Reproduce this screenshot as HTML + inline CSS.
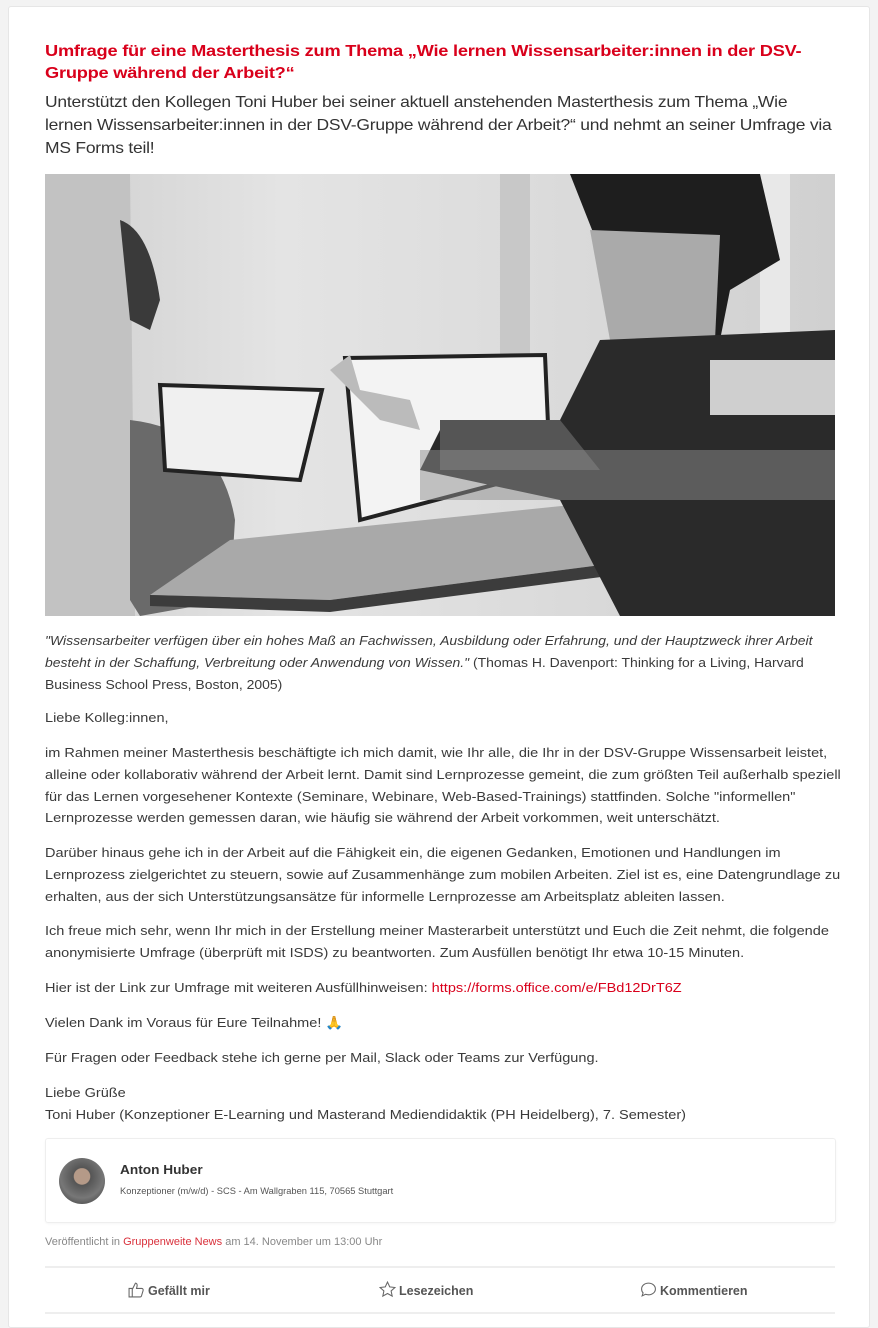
<!DOCTYPE html>
<html><head><meta charset="utf-8"><style>
body{margin:0;width:878px;height:1319px;background:#f3f3f3;font-family:"Liberation Sans",sans-serif;overflow:hidden;position:relative}
.card{position:absolute;left:8px;top:6px;width:860px;height:1320px;background:#fff;border:1px solid #e6e6e6;border-radius:3px}
.a{position:absolute;left:45px;white-space:nowrap;transform-origin:0 0}
.t{color:#d9001b;font-weight:bold;font-size:15.6px;line-height:22px;letter-spacing:-0.2px;transform:scaleX(1.17)}
.s{color:#333;font-size:15.6px;line-height:23px;letter-spacing:-0.2px;transform:scaleX(1.12)}
.p{color:#3a3a3a;font-size:12.8px;line-height:21.8px;transform:scaleX(1.135)}
.red{color:#d9001b}
</style></head><body>
<div class="card"></div>
<div class="a t" style="top:41px">Umfrage für eine Masterthesis zum Thema „Wie lernen Wissensarbeiter:innen in der DSV-<br>Gruppe während der Arbeit?“</div>
<div class="a s" style="top:91px">Unterstützt den Kollegen Toni Huber bei seiner aktuell anstehenden Masterthesis zum Thema „Wie<br>lernen Wissensarbeiter:innen in der DSV-Gruppe während der Arbeit?“ und nehmt an seiner Umfrage via<br>MS Forms teil!</div>
<svg class="a" style="top:174px" width="790" height="442" viewBox="45 174 790 442">
<defs><linearGradient id="bg" x1="0" x2="1"><stop offset="0" stop-color="#cfcfcf"/><stop offset=".3" stop-color="#e4e4e4"/><stop offset=".6" stop-color="#dcdcdc"/><stop offset="1" stop-color="#d0d0d0"/></linearGradient></defs>
<rect x="45" y="174" width="790" height="442" fill="url(#bg)"/>
<rect x="500" y="174" width="30" height="300" fill="#c8c8c8"/>
<rect x="760" y="174" width="30" height="260" fill="#e8e8e8"/>
<path d="M45 174 L130 174 L135 616 L45 616Z" fill="#c2c2c2"/>
<path d="M120 220 Q150 230 160 300 L150 330 L130 320Z" fill="#3a3a3a"/>
<path d="M130 420 Q220 430 235 520 L230 600 L140 616 L130 600Z" fill="#6a6a6a"/>
<path d="M150 595 L330 600 L640 560 L835 520 L835 470 L620 500 L230 540Z" fill="#a9a9a9"/>
<path d="M150 595 L330 600 L640 560 L835 520 L835 530 L640 572 L330 612 L150 606Z" fill="#3c3c3c"/>
<path d="M160 385 L322 390 L300 480 L165 470Z" fill="#f0f0f0" stroke="#222" stroke-width="4"/>
<path d="M345 358 L545 355 L550 470 L360 520Z" fill="#f3f3f3" stroke="#222" stroke-width="4"/>
<path d="M570 174 L760 174 L780 260 L730 290 L720 340 L620 330 L600 250Z" fill="#1e1e1e"/>
<path d="M590 230 L720 235 L715 340 L650 350 L610 340Z" fill="#aaaaaa"/>
<path d="M600 340 L835 330 L835 616 L620 616 L560 500 L420 470 L440 430 L560 420Z" fill="#2a2a2a"/>
<path d="M440 420 L560 420 L600 470 L440 470Z" fill="#555"/>
<rect x="710" y="360" width="125" height="55" fill="#cfcfcf"/>
<path d="M330 370 L350 355 L360 390 L410 400 L420 430 L380 420Z" fill="#bbbbbb"/>
<rect x="420" y="450" width="415" height="50" fill="#8e8e8e" opacity=".5"/>
</svg>
<div class="a p" style="top:630px;transform:scaleX(1.09)"><i>"Wissensarbeiter verfügen über ein hohes Maß an Fachwissen, Ausbildung oder Erfahrung, und der Hauptzweck ihrer Arbeit<br>besteht in der Schaffung, Verbreitung oder Anwendung von Wissen."</i> (Thomas H. Davenport: Thinking for a Living, Harvard<br>Business School Press, Boston, 2005)</div>
<div class="a p" style="top:707px">Liebe Kolleg:innen,</div>
<div class="a p" style="top:742px">im Rahmen meiner Masterthesis beschäftigte ich mich damit, wie Ihr alle, die Ihr in der DSV-Gruppe Wissensarbeit leistet,<br>alleine oder kollaborativ während der Arbeit lernt. Damit sind Lernprozesse gemeint, die zum größten Teil außerhalb speziell<br>für das Lernen vorgesehener Kontexte (Seminare, Webinare, Web-Based-Trainings) stattfinden. Solche "informellen"<br>Lernprozesse werden gemessen daran, wie häufig sie während der Arbeit vorkommen, weit unterschätzt.</div>
<div class="a p" style="top:842px">Darüber hinaus gehe ich in der Arbeit auf die Fähigkeit ein, die eigenen Gedanken, Emotionen und Handlungen im<br>Lernprozess zielgerichtet zu steuern, sowie auf Zusammenhänge zum mobilen Arbeiten. Ziel ist es, eine Datengrundlage zu<br>erhalten, aus der sich Unterstützungsansätze für informelle Lernprozesse am Arbeitsplatz ableiten lassen.</div>
<div class="a p" style="top:920px">Ich freue mich sehr, wenn Ihr mich in der Erstellung meiner Masterarbeit unterstützt und Euch die Zeit nehmt, die folgende<br>anonymisierte Umfrage (überprüft mit ISDS) zu beantworten. Zum Ausfüllen benötigt Ihr etwa 10-15 Minuten.</div>
<div class="a p" style="top:977px">Hier ist der Link zur Umfrage mit weiteren Ausfüllhinweisen: <span class="red">https://forms.office.com/e/FBd12DrT6Z</span></div>
<div class="a p" style="top:1012px">Vielen Dank im Voraus für Eure Teilnahme! 🙏</div>
<div class="a p" style="top:1047px">Für Fragen oder Feedback stehe ich gerne per Mail, Slack oder Teams zur Verfügung.</div>
<div class="a p" style="top:1082px">Liebe Grüße<br>Toni Huber (Konzeptioner E-Learning und Masterand Mediendidaktik (PH Heidelberg), 7. Semester)</div>
<div style="position:absolute;left:45px;top:1138px;width:789px;height:83px;border:1px solid #eee;border-radius:3px;box-shadow:0 1px 2px rgba(0,0,0,.04)"></div>
<div style="position:absolute;left:59px;top:1158px;width:46px;height:46px;border-radius:50%;background:radial-gradient(circle at 50% 40%,#b59a88 0 22%,#555 24%,#777 60%,#333)"></div>
<div class="a" style="left:120px;top:1162px;font-size:13px;font-weight:bold;color:#333;transform:scaleX(1.05)">Anton Huber</div>
<div class="a" style="left:120px;top:1186px;font-size:9.5px;color:#555;transform:scaleX(0.98)">Konzeptioner (m/w/d) - SCS - Am Wallgraben 115, 70565 Stuttgart</div>
<div class="a" style="top:1236px;font-size:11px;color:#888;transform:scaleX(1.0)">Veröffentlicht in <span style="color:#d9303b">Gruppenweite News</span> am 14. November um 13:00 Uhr</div>
<div style="position:absolute;left:45px;top:1266px;width:790px;height:2px;background:#eee"></div>
<div style="position:absolute;left:45px;top:1312px;width:790px;height:2px;background:#eee"></div>
<div class="a" style="left:128px;top:1281px;font-size:12.5px;font-weight:bold;color:#555"><svg width="17" height="17" viewBox="0 0 16 16" style="vertical-align:-3px;margin-right:3px"><path d="M1 7h3v8H1zM4 8l3-6c1 0 2 1 1.5 3L8 7h5c1 0 1.5 1 1.2 2l-1.5 5c-.2.6-.7 1-1.3 1H4" fill="none" stroke="#666" stroke-width="1"/></svg>Gefällt mir</div>
<div class="a" style="left:379px;top:1281px;font-size:12.5px;font-weight:bold;color:#555"><svg width="17" height="17" viewBox="0 0 16 16" style="vertical-align:-3px;margin-right:3px"><path d="M8 1l2.1 4.5 4.9.6-3.6 3.3 1 4.8L8 11.8 3.6 14.2l1-4.8L1 6.1l4.9-.6z" fill="none" stroke="#666" stroke-width="1"/></svg>Lesezeichen</div>
<div class="a" style="left:640px;top:1281px;font-size:12.5px;font-weight:bold;color:#555"><svg width="17" height="17" viewBox="0 0 16 16" style="vertical-align:-3px;margin-right:3px"><path d="M8 2c3.6 0 6.5 2.4 6.5 5.5S11.6 13 8 13c-1 0-2-.2-2.8-.5L2 14l.9-2.8C2 10.2 1.5 8.9 1.5 7.5 1.5 4.4 4.4 2 8 2z" fill="none" stroke="#666" stroke-width="1"/></svg>Kommentieren</div>
</body></html>
